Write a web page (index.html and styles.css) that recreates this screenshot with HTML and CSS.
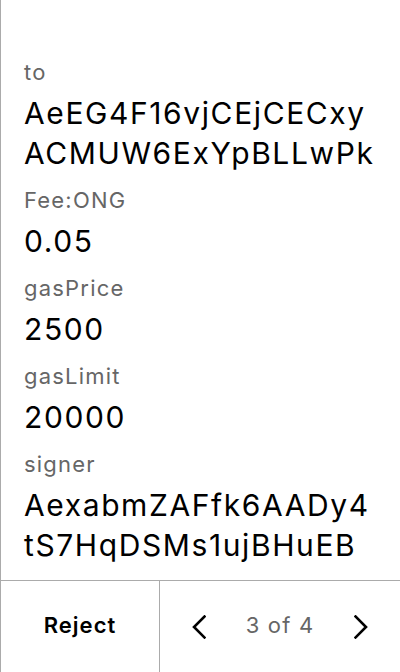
FILE: index.html
```html
<!DOCTYPE html>
<html lang="en">
<head>
<meta charset="utf-8">
<title>Transaction</title>
<link rel="stylesheet" href="styles.css">
</head>
<body>
<div class="screen">
  <main class="details">
    <div class="field">
      <div class="label">to</div>
      <div class="value">AeEG4F16vjCEjCECxy<wbr>ACMUW6ExYpBLLwPk</div>
    </div>
    <div class="field">
      <div class="label">Fee:ONG</div>
      <div class="value">0.05</div>
    </div>
    <div class="field">
      <div class="label">gasPrice</div>
      <div class="value">2500</div>
    </div>
    <div class="field">
      <div class="label">gasLimit</div>
      <div class="value">20000</div>
    </div>
    <div class="field">
      <div class="label">signer</div>
      <div class="value">AexabmZAFfk6AADy4<wbr>tS7HqDSMs1ujBHuEB</div>
    </div>
  </main>
  <footer class="actions">
    <button class="reject" type="button">Reject</button>
    <div class="pager">
      <button class="nav" type="button" aria-label="Previous">
        <svg width="14" height="24" viewBox="0 0 14 24"><path d="M12.5 1.5 L2 12 L12.5 22.5" fill="none" stroke="#000" stroke-width="2.6" stroke-linecap="square" stroke-linejoin="miter"/></svg>
      </button>
      <span class="count">3 of 4</span>
      <button class="nav" type="button" aria-label="Next">
        <svg width="14" height="24" viewBox="0 0 14 24"><path d="M1.5 1.5 L12 12 L1.5 22.5" fill="none" stroke="#000" stroke-width="2.6" stroke-linecap="square" stroke-linejoin="miter"/></svg>
      </button>
    </div>
  </footer>
</div>
</body>
</html>
```

FILE: styles.css
```css
* { box-sizing: border-box; }
html, body { margin: 0; padding: 0; background: #fff; }
body {
  font-family: Inter, "Noto Sans", "Liberation Sans", sans-serif;
  color: #000;
}
.screen {
  display: flex;
  flex-direction: column;
  height: 672px;
  border-left: 1px solid #ababab;
}
.details {
  flex: 1;
  min-height: 0;
  overflow: hidden;
  padding: 57.5px 10px 0 23px;
}
.field { margin-bottom: 13px; }
.field:last-child { margin-bottom: 0; }
.label {
  font-size: 22px;
  line-height: 28px;
  letter-spacing: 1.2px;
  color: #666;
  margin-bottom: 7px;
}
.value {
  font-size: 30px;
  line-height: 40px;
  letter-spacing: 1.6px;
  color: #000;
}
.actions {
  display: flex;
  flex-shrink: 0;
  height: 92px;
  border-top: 1px solid #ababab;
}
button {
  font: inherit;
  background: none;
  border: 0;
  padding: 0;
  margin: 0;
  color: inherit;
}
.reject {
  width: 159px;
  border-right: 1px solid #ababab;
  font-size: 22px;
  font-weight: 600;
  letter-spacing: 1px;
  color: #000;
  padding-bottom: 3px;
}
.pager {
  flex: 1;
  display: flex;
  align-items: center;
  justify-content: space-between;
  padding: 0 32px 0 32px;
}
.nav {
  display: flex;
  width: 14px;
  height: 24px;
}
.count {
  font-size: 22px;
  letter-spacing: 1.2px;
  color: #666;
  padding-bottom: 3px;
}
```
